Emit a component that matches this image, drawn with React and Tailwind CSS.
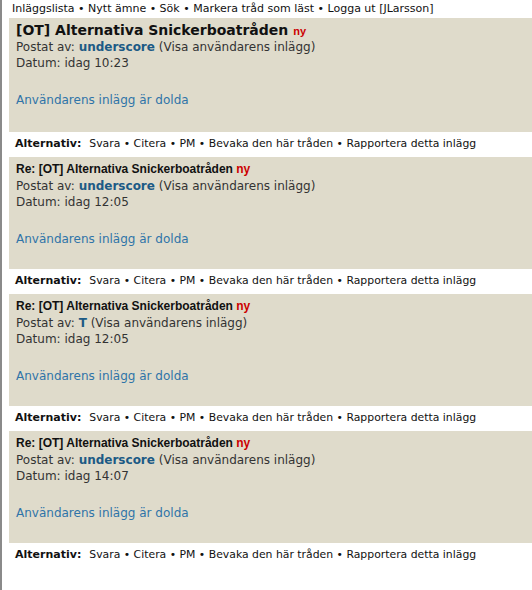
import React from "react";

function Post({ first, title, user, date }) {
  return (
    <div className={`bg-[#dfdbcb] pl-[7px] pt-[3px] ${first ? "h-[114px]" : "h-[112px]"}`}>
      {first ? (
        <div className="font-['DejaVu_Sans',Verdana,sans-serif] text-[14px] font-bold text-[#111] leading-[18px]">
          {title}{" "}
          <span className="font-['Liberation_Sans',Arial,sans-serif] text-[11px] leading-none text-[#c00]">ny</span>
        </div>
      ) : (
        <div className="font-['Liberation_Sans',Arial,sans-serif] text-[12px] font-bold text-[#111] leading-[18px]">
          {title} <span className="text-[#c00]">ny</span>
        </div>
      )}
      <div className="font-['DejaVu_Sans',Verdana,sans-serif] text-[12px] text-[#333] leading-[16px]">
        Postat av: <span className="font-bold text-[#1c5a85]">{user}</span> (Visa användarens inlägg)
      </div>
      <div className="font-['DejaVu_Sans',Verdana,sans-serif] text-[12px] text-[#333] leading-[16px]">
        Datum: {date}
      </div>
      <div className="font-['DejaVu_Sans',Verdana,sans-serif] text-[12px] text-[#2f74a8] leading-[16px] mt-[21px]">
        Användarens inlägg är dolda
      </div>
    </div>
  );
}

function Alt() {
  return (
    <div className="h-[25px] flex items-center pl-[6px] font-['DejaVu_Sans',Verdana,sans-serif] text-[11px] text-[#111]">
      <span className="font-bold">Alternativ:</span>
      <span className="ml-[8px] text-[10.85px]">
        Svara • Citera • PM • Bevaka den här tråden • Rapportera detta inlägg
      </span>
    </div>
  );
}

export default function App() {
  const posts = [
    { first: true, title: "[OT] Alternativa Snickerboatråden", user: "underscore", date: "idag 10:23" },
    { title: "Re: [OT] Alternativa Snickerboatråden", user: "underscore", date: "idag 12:05" },
    { title: "Re: [OT] Alternativa Snickerboatråden", user: "T", date: "idag 12:05" },
    { title: "Re: [OT] Alternativa Snickerboatråden", user: "underscore", date: "idag 14:07" },
  ];
  return (
    <div className="w-[532px] h-[590px] bg-white border-l-2 border-[#8a8a8a] overflow-hidden">
      <div className="h-[18px] pl-[10px] font-['DejaVu_Sans',Verdana,sans-serif] text-[11px] text-[#111] leading-[18px]">
        Inläggslista • Nytt ämne • Sök • Markera tråd som läst • Logga ut [JLarsson]
      </div>
      <div className="pl-[7px]">
        {posts.map((p, i) => (
          <React.Fragment key={i}>
            <Post {...p} />
            <Alt />
          </React.Fragment>
        ))}
      </div>
    </div>
  );
}
